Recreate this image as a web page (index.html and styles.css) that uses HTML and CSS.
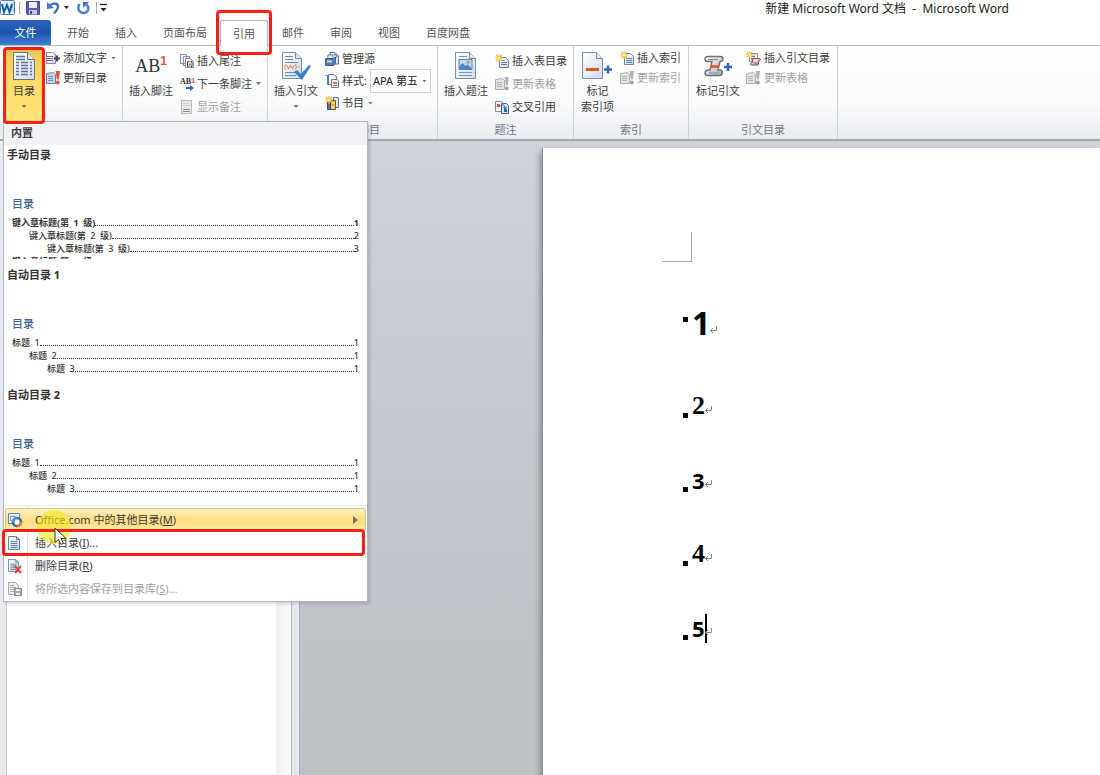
FILE: index.html
```html
<!DOCTYPE html>
<html lang="zh-CN">
<head>
<meta charset="utf-8">
<title>新建 Microsoft Word 文档 - Microsoft Word</title>
<link rel="stylesheet" href="styles.css">
</head>
<body>
<svg class="sprite" aria-hidden="true">
  <defs>
    <linearGradient id="paper" x1="0" y1="0" x2="1" y2="1"><stop offset="0" stop-color="#fff"/><stop offset="1" stop-color="#cfdcec"/></linearGradient>
    <linearGradient id="metal" x1="0" y1="0" x2="1" y2="1"><stop offset="0" stop-color="#fff"/><stop offset="1" stop-color="#a9adb3"/></linearGradient>
    <symbol id="star" viewBox="0 0 8 8"><path d="M4 0v8M0 4h8M1 1l6 6M7 1L1 7" stroke="#eebc35" stroke-width="1.2"/><circle cx="4" cy="4" r="1.5" fill="#fff3a8"/></symbol>
    <symbol id="page" viewBox="0 0 12 14"><path d="M.5.5h8l3 3v10H.5z" fill="url(#paper)" stroke="#6c83a3"/><path d="M8.500 .5v3h3M2.500 5.500h7M2.500 7.500h7M2.500 9.500h7M2.500 11.500h7" fill="none" stroke="#607da4"/></symbol>
    <symbol id="update" viewBox="0 0 14 14"><path d="M.5 2.500l7-1 2 2v9h-9z" fill="#c4d3e6" stroke="#6c83a3"/><path d="M2 5.500h5M2 7.500h5M2 9.500h5" stroke="#7890b2"/><path d="M9.500 0H14l-1.200 8.500h-2z" fill="#f0512d"/><circle cx="11.800" cy="11.500" r="1.900" fill="#f0512d"/></symbol>
    <symbol id="update-off" viewBox="0 0 14 14"><path d="M.5 2.500l7-1 2 2v9h-9z" fill="#e2e2e2" stroke="#b0b0b0"/><path d="M2 5.500h5M2 7.500h5M2 9.500h5" stroke="#b5b5b5"/><path d="M9.500 0H14l-1.200 8.500h-2z" fill="#b4b4b4"/><circle cx="11.800" cy="11.500" r="1.900" fill="#a4a4a4"/></symbol>
    <symbol id="return" viewBox="0 0 7 8"><path d="M6.500 0v4.500h-6M3 2L.5 4.500 3 7" fill="none" stroke="#888"/></symbol>
  </defs>
</svg>

<div class="app">
  <header class="titlebar">
    <div class="quick">
      <svg width="16" height="16" viewBox="0 0 16 16"><rect x=".5" y=".5" width="14" height="14" rx="1" fill="#eaf3fc" stroke="#4d82ba"/><path d="M11 3h3M11 5h3M11 7h3M11 9h3M11 11h3" stroke="#8fb2d8"/><path d="M2 4l2 8 3-7 2.500 7L12 4" fill="none" stroke="#195ba7" stroke-width="2"/></svg>
      <span class="divider"></span>
      <button class="plain" aria-label="保存"><svg width="14" height="14" viewBox="0 0 14 14"><path d="M.5.5h13v13h-12l-1-1z" fill="#5a5ab6" stroke="#494894"/><path d="M3 1h8v6H3z" fill="#eef3fc"/><path d="M3 9h8v4.500H3z" fill="#c7cbe2"/><path d="M4 10h2v3H4z" fill="#45458c"/></svg></button>
      <button class="plain undo" aria-label="撤消"><svg width="13" height="14" viewBox="0 0 13 14"><path d="M2 5.500c2-3 8-4.500 9-.5 .5 3-2 5-4 7.500" fill="none" stroke="#3e72c4" stroke-width="2.400"/><path d="M0 1l0 7 7-1z" fill="#3e72c4"/></svg></button>
      <span class="caret dark"></span>
      <button class="plain redo" aria-label="重复"><svg width="13" height="14" viewBox="0 0 13 14"><path d="M2.500 3C0 7 2 12 6.500 12s6.500-5 3-8.500" fill="none" stroke="#4b85d0" stroke-width="2.500"/><path d="M6 1h6l-6 6z" fill="#3e72c4"/></svg></button>
      <span class="divider"></span>
      <button class="plain" aria-label="自定义快速访问工具栏"><svg width="8" height="10" viewBox="0 0 8 10"><path d="M0 1.500h7" stroke="#222" stroke-width="1.300"/><path d="M.5 5h6L3.500 8.500z" fill="#222"/></svg></button>
    </div>
    <h1 class="title">新建 Microsoft Word 文档 &nbsp;- &nbsp;Microsoft Word</h1>
  </header>

  <nav class="tabs">
    <button class="tab file">文件</button>
    <button class="tab">开始</button>
    <button class="tab">插入</button>
    <button class="tab">页面布局</button>
    <button class="tab active">引用<span class="mark"></span></button>
    <button class="tab">邮件</button>
    <button class="tab">审阅</button>
    <button class="tab">视图</button>
    <button class="tab">百度网盘</button>
  </nav>

  <section class="ribbon">
    <div class="group contents">
      <div class="tools">
        <button class="big open">
          <span class="art"><svg width="22" height="28" viewBox="0 0 22 28"><path d="M.5.5h14l7 7v20H.5z" fill="url(#paper)" stroke="#65738a"/><path d="M14.500 .5v7h7" fill="#e2ebf6" stroke="#65738a"/><path d="M3 4.500h9M3 7.500h9M3 10.500h3M3 13.500h3M3 16.500h3M3 19.500h3M3 22.500h3M8 10.500h7M8 13.500h7M8 16.500h7M8 19.500h7M8 22.500h7M17 10.500h2M17 13.500h2M17 16.500h2M17 19.500h2M17 22.500h2" stroke="#57769f" stroke-width="1.400"/></svg></span>
          目录<span class="caret"></span><span class="mark"></span>
        </button>
        <div class="stack">
          <button class="small"><svg width="14" height="14" viewBox="0 0 14 14"><path d="M.5 1.500h6l3 2v9h-9z" fill="url(#paper)" stroke="#7f8ca5"/><path d="M1 5.500h6M1 9.500h6" stroke="#5c7aa6"/><path d="M1 7.500h6" stroke="#e34a35"/><path d="M11 4.500v6M8 7.500h6" stroke="#3b4259" stroke-width="2"/></svg>添加文字<span class="caret"></span></button>
          <button class="small"><svg width="14" height="14"><use href="#update"/></svg>更新目录</button>
        </div>
      </div>
    </div>

    <div class="group">
      <div class="tools">
        <button class="big">
          <span class="art"><span class="ab">AB<sup>1</sup></span></span>
          插入脚注
        </button>
        <div class="stack three">
          <button class="small"><svg width="14" height="14" viewBox="0 0 14 14"><path d="M.5.5h6v9h-6zM3.500 2.500h6v9h-6z" fill="#f3f7fc" stroke="#7e91ad"/><path d="M5.500 4.500h5l3 3v6h-8z" fill="#fff" stroke="#7e91ad"/><path d="M8.500 7.500h-1v5h1M11 7.500h1v5h-1" fill="none" stroke="#333"/><path d="M9.800 7v1.500M9.800 9.500v3" stroke="#e0482d" stroke-width="1.300"/></svg>插入尾注</button>
          <button class="small"><span class="ab mini"><span>AB</span><sup>1</sup><svg width="8" height="6" viewBox="0 0 8 6"><path d="M0 2h4V0l4 3-4 3V4H0z" fill="#2d68b7"/></svg></span>下一条脚注<span class="caret"></span></button>
          <button class="small" disabled><svg width="14" height="14" viewBox="0 0 14 14"><path d="M1.500 .5h10v13h-10z" fill="#e9e9e9" stroke="#b8b8b8"/><path d="M3 9.500h7M3 11.500h7" stroke="#888"/><path d="M3 3.500h7M3 5.500h7" stroke="#d2d2d2"/></svg>显示备注</button>
        </div>
      </div>
    </div>

    <div class="group">
      <div class="tools">
        <button class="big">
          <span class="art"><svg width="30" height="30" viewBox="0 0 30 30"><path d="M1.500 1.500h13l6 6v20h-19z" fill="url(#paper)" stroke="#7890ad"/><path d="M14.500 1.500v6h6" fill="#dce8f5" stroke="#7890ad"/><path d="M4 5.500h8M4 8.500h8M4 11.500h13M4 21.500h11M4 24.500h11" stroke="#6c8bb4"/><path d="M5 13.500c-2 2-2 3 0 5M14 13.500c2 2 2 3 0 5M6 14.500l1.500 3 2-3 2 3 1.500-3M16.500 16h3" fill="none" stroke="#e59a62" stroke-width="1.200"/><path d="M13 21l3-2 4 4 8-9 2 1-9 14z" fill="#3c7ed0"/></svg></span>
          插入引文<span class="caret"></span>
        </button>
        <div class="stack mid">
          <button class="small"><svg width="14" height="14" viewBox="0 0 14 14"><path d="M5 .5h5l3.500 3.500v8H5z" fill="#e3ecf7" stroke="#5b77a1"/><path d="M3 3h5v4H3z" fill="#fff" stroke="#55749e"/><path d="M.5 6.500h8l2-1.500v6l-2 2.500h-8z" fill="#527eaf" stroke="#3b5f8e"/><path d="M2 8.500h5v2H2z" fill="#d4e3f2"/><path d="M9 2.500c2 0 3 1 3 3" fill="none" stroke="#2e5489"/></svg>管理源</button>
          <div class="small"><svg width="14" height="14" viewBox="0 0 14 14"><path d="M.5 1.500h2v9h3M3.500 .5h5l3 2v8h-8z" fill="#eef3fa" stroke="#667fa6"/><path d="M6.500 5.500h6l1 2v6h-7z" fill="#f8f2f5" stroke="#7c7392"/><path d="M8 9h4" stroke="#e0432d" stroke-width="1.500"/><path d="M8 11.500h4" stroke="#657ca1"/></svg><label for="style">样式:</label>
            <span class="pick"><select id="style"><option>APA 第五版</option></select><span class="caret"></span></span>
          </div>
          <button class="small"><svg width="14" height="14" viewBox="0 0 14 14"><path d="M8.500 1.500h5v10h-5z" fill="#dae6f4" stroke="#5e7da8"/><path d="M5.500 4.500h5v9h-5z" fill="#e7b23b" stroke="#775b23"/><path d="M2.500 5.500h3v8h-3z" fill="#5c6da5" stroke="#3d4a79"/><path d="M6 7h4M6 11h4" stroke="#fff0b0"/><use href="#star" width="8" height="8"/></svg>书目<span class="caret"></span></button>
        </div>
      </div>
      <div class="caption">引文与书目</div>
    </div>

    <div class="group">
      <div class="tools">
        <button class="big">
          <span class="art"><svg width="22" height="28" viewBox="0 0 22 28"><path d="M.5.5h14l6 6v20H.5z" fill="url(#paper)" stroke="#7890ad"/><path d="M14.500 .5v6h6" fill="#dce8f5" stroke="#7890ad"/><path d="M4 7.500h13v10H4z" fill="#b9d8f4" stroke="#5c82b5"/><path d="M4.500 17v-3l3-3 3 3 2-1.500 4 3.500v1z" fill="#4c83c4"/><circle cx="13" cy="10.500" r="1.400" fill="#ed7b48"/><path d="M4 4.500h8M4 20.500h13M4 23.500h13" stroke="#7797be"/></svg></span>
          插入题注
        </button>
        <div class="stack three">
          <button class="small"><svg width="14" height="14" viewBox="0 0 14 14"><path d="M4.500 3.500h6l3 3v7h-9z" fill="url(#paper)" stroke="#6c83a3"/><path d="M6 8.500h6M6 10.500h6M7.500 6.500h2" stroke="#607da4"/><use href="#star" width="8" height="8"/></svg>插入表目录</button>
          <button class="small" disabled><svg width="14" height="14"><use href="#update-off"/></svg>更新表格</button>
          <button class="small"><svg width="14" height="14" viewBox="0 0 14 14"><path d="M.5 1.500h6l2 2v8h-8z" fill="#f8fbff" stroke="#6d8bb4"/><path d="M6.500 3.500h5l2 2v8h-7z" fill="#d7e4f4" stroke="#40669d"/><path d="M2 4h3v3H2z" fill="#e64d32"/><path d="M9 9h3v3H9z" fill="#3264ab"/><path d="M5 6c3-2 5-1 5 2M8.500 7l1.500 2 1.500-2" fill="none" stroke="#2b579c"/></svg>交叉引用</button>
        </div>
      </div>
      <div class="caption">题注</div>
    </div>

    <div class="group wide">
      <div class="tools">
        <button class="big">
          <span class="art"><svg width="30" height="28" viewBox="0 0 30 28"><path d="M.5.5h14l6 6v20H.5z" fill="url(#paper)" stroke="#7890ad"/><path d="M14.500 .5v6h6" fill="#dce8f5" stroke="#7890ad"/><path d="M4 17.500h13" stroke="#ea5023" stroke-width="3"/><path d="M26 13.500v8M22 17.500h8" stroke="#3167c4" stroke-width="2.600"/></svg></span>
          标记<br>索引项
        </button>
        <div class="stack">
          <button class="small"><svg width="14" height="14" viewBox="0 0 14 14"><path d="M4.500 2.500h6l3 3v8h-9z" fill="url(#paper)" stroke="#6c83a3"/><path d="M6 7.500h6M6 9.500h6M6 11.500h6" stroke="#607da4"/><use href="#star" width="8" height="8"/></svg>插入索引</button>
          <button class="small" disabled><svg width="14" height="14"><use href="#update-off"/></svg>更新索引</button>
        </div>
      </div>
      <div class="caption">索引</div>
    </div>

    <div class="group wide">
      <div class="tools">
        <button class="big">
          <span class="art"><svg width="28" height="22" viewBox="0 0 28 22"><path d="M4 1.500h12c4 0 4 5 0 5l-2 8.500h2c3 0 3 5 0 5.500H4c-4 0-4-5 0-5.500h2l2-8.500H4c-4 0-4-5 0-5z" fill="url(#metal)" stroke="#6b7078" stroke-width="1.400"/><path d="M4 4.500h10M5 18h10" stroke="#85898f"/><path d="M6 11.500h9" stroke="#ea5023" stroke-width="2.600"/><path d="M24 8v8M20 12h8" stroke="#3167c4" stroke-width="2.600"/></svg></span>
          标记引文
        </button>
        <div class="stack">
          <button class="small"><svg width="15" height="15" viewBox="0 0 15 15"><path d="M3.500 2.500h8v8h-8z" fill="#f5f5f7" stroke="#8a8f9c"/><path d="M5 5.500h4M5 8h3" stroke="#e65434" stroke-width="1.500"/><path d="M7 7.500h6c2 0 2 2 0 2l-1 4.500H6c-2 0-2-2 0-2z" fill="url(#metal)" stroke="#555a65"/><path d="M7.500 12h4" stroke="#e0482d"/><use href="#star" width="7" height="7"/></svg>插入引文目录</button>
          <button class="small" disabled><svg width="15" height="14"><use href="#update-off" width="14" height="14"/></svg>更新表格</button>
        </div>
      </div>
      <div class="caption">引文目录</div>
    </div>

    <div class="menu">
      <div class="menu-head">内置</div>
      <div class="entry">
        <h2>手动目录</h2>
        <div class="preview strong">
          <h3>目录</h3>
          <p class="l1">键入章标题(第&ensp;1&ensp;级)<i></i>1</p>
          <p class="l2">键入章标题(第&ensp;2&ensp;级)<i></i>2</p>
          <p class="l3">键入章标题(第&ensp;3&ensp;级)<i></i>3</p>
          <p class="l1">键入章标题(第&ensp;1&ensp;级)<i></i>4</p>
        </div>
      </div>
      <div class="entry">
        <h2>自动目录 1</h2>
        <div class="preview">
          <h3>目录</h3>
          <p class="l1">标题&ensp;1<i></i>1</p>
          <p class="l2">标题&ensp;2<i></i>1</p>
          <p class="l3">标题&ensp;3<i></i>1</p>
        </div>
      </div>
      <div class="entry">
        <h2>自动目录 2</h2>
        <div class="preview">
          <h3>目录</h3>
          <p class="l1">标题&ensp;1<i></i>1</p>
          <p class="l2">标题&ensp;2<i></i>1</p>
          <p class="l3">标题&ensp;3<i></i>1</p>
        </div>
      </div>
      <div class="commands">
        <button class="command hot"><svg width="16" height="16" viewBox="0 0 16 16"><path d="M1.500 1.500h11v10h-11z" fill="#e8f1fb" stroke="#6387b5"/><path d="M3.500 4.500h5v4h-5z" fill="#fff" stroke="#7b9bc6"/><circle cx="10" cy="10" r="4" fill="#fff" stroke="#2e6fb5" stroke-width="2.600"/><path d="M6 10a4 4 0 0 1 4-4" fill="none" stroke="#44a0cf" stroke-width="2.600"/><path d="M14 10a4 4 0 0 1-4 4" fill="none" stroke="#ed7d27" stroke-width="2.600"/></svg><span>Office.com 中的其他目录(<u>M</u>)</span><svg class="more" width="5" height="8" viewBox="0 0 5 8"><path d="M0 0l5 4-5 4z" fill="#777668"/></svg></button>
        <button class="command"><svg width="14" height="14" viewBox="-1 0 14 14"><use href="#page" width="12" height="14"/></svg><span>插入目录(<u>I</u>)...</span><span class="mark"></span></button>
        <button class="command"><svg width="16" height="16" viewBox="0 0 16 16"><use href="#page" x="1" y="1" width="11" height="13"/><path d="M8 8l6 7M14 8l-6 7" stroke="#e5482f" stroke-width="2"/></svg><span>删除目录(<u>R</u>)</span></button>
        <button class="command" disabled><svg width="16" height="16" viewBox="0 0 16 16"><path d="M1.500 1.500h7l3 3v9h-10z" fill="#eee" stroke="#aaa"/><path d="M3 4.500h4M3 6.500h6M3 8.500h4M3 10.500h4" stroke="#aaa"/><path d="M7.500 7.500h7v7h-7z" fill="#aaa" stroke="#8b8b8b"/><path d="M9 8h4v2H9zM9 12h4v2H9z" fill="#eee"/></svg><span>将所选内容保存到目录库(<u>S</u>)...</span></button>
        <div class="spot"></div>
        <svg class="pointer" width="13" height="19" viewBox="0 0 13 19"><path d="M1 1v14.500l3.500-3 2.300 5 2.600-1.200-2.300-4.800H12z" fill="#fff" stroke="#333"/></svg>
      </div>
    </div>
  </section>

  <main class="workspace">
    <aside class="nav-pane"><div class="nav-list"></div><div class="nav-scroll"></div></aside>
    <div class="desk">
      <article class="sheet">
        <div class="corner"></div>
        <h2 class="line one"><span class="dot"></span>1<svg width="7" height="8"><use href="#return"/></svg></h2>
        <h3 class="line serif"><span class="dot"></span>2<svg width="7" height="8"><use href="#return"/></svg></h3>
        <h4 class="line"><span class="dot"></span>3<svg width="7" height="8"><use href="#return"/></svg></h4>
        <h5 class="line serif"><span class="dot"></span>4<svg width="7" height="8"><use href="#return"/></svg></h5>
        <h6 class="line"><span class="dot"></span>5<span class="cursor"></span><svg width="7" height="8"><use href="#return"/></svg></h6>
      </article>
    </div>
  </main>
</div>
</body>
</html>
```
FILE: styles.css
```css
* { box-sizing: border-box; }
body {
  margin: 0;
  background: #fff;
  color: #3b3b3b;
  font: 11px/16px "Noto Sans", "Noto Sans CJK SC", sans-serif;
}
h1, h2, h3, h4, h5, h6, p { margin: 0; font: inherit; }
button {
  margin: 0;
  padding: 0;
  border: 0;
  background: none;
  color: inherit;
  font: inherit;
  white-space: nowrap;
}
svg { display: block; flex: none; }
.sprite { position: absolute; width: 0; height: 0; }
.app { display: flex; flex-direction: column; min-height: 100vh; }

.mark {
  position: absolute;
  z-index: 5;
  border: 3px solid #fd1f14;
  border-radius: 4px;
  pointer-events: none;
}
.caret {
  flex: none;
  width: 5px;
  height: 3px;
  background: #777;
  clip-path: polygon(0 0, 100% 0, 50% 100%);
}
.caret.dark { background: #222; }

/* Title bar */
.titlebar { display: flex; justify-content: space-between; height: 20px; }
.quick { display: flex; align-items: center; height: 15px; }
.divider { width: 1px; height: 12px; margin: 0 6px 0 3px; background: #aaa; }
.undo { margin: 0 4px 0 7px; }
.redo { margin: 0 3px 0 8px; }
.redo + .divider { margin-right: 3px; }
.title { padding: 1px 91px 0 0; color: #222; font-size: 12px; }

/* Tabs */
.tabs { display: flex; height: 25px; }
.tab { position: relative; padding: 0 13px; color: #555; }
.tab.file {
  width: 51px;
  margin-right: 3px;
  border-radius: 0 3px 0 0;
  background: linear-gradient(#2a63bd, #1f57b0 50%, #3c80d6);
  color: #fff;
}
.tab.active {
  z-index: 2;
  height: 26px;
  margin: 0 1px 0 0;
  border: 1px solid #b4b8be;
  border-bottom: 0;
  border-radius: 3px 3px 0 0;
  padding: 0 12px;
  background: #fff;
}
.tab.active .mark { inset: -11px -5px -9px -5px; }

/* Ribbon */
.ribbon {
  position: relative;
  z-index: 1;
  display: flex;
  height: 96px;
  border-top: 1px solid #b9bec6;
  border-bottom: 2px solid #a3a7b1;
  background: linear-gradient(#fff, #fafbfc 60%, #e9ecf0);
}
.group {
  display: flex;
  flex-direction: column;
  justify-content: space-between;
  padding: 2px 6px 0;
  border-right: 1px solid #cfd3d9;
}
.group.contents { padding-left: 5px; }
.group.wide { padding: 2px 7px 0; }
.tools { display: flex; gap: 7px; }
.contents .tools { gap: 3px; }
.wide .tools { gap: 6px; }
.big {
  position: relative;
  display: flex;
  flex-direction: column;
  align-items: center;
  height: 74px;
}
.big .caret { margin-top: 6px; }
.art { display: flex; align-items: center; justify-content: center; height: 35px; }
.big:has(br) { width: 33px; }
.big.open {
  width: 38px;
  background: linear-gradient(#f3c64d, #ffdc68 50%, #ffe27a);
}
.big.open .mark { inset: -1px -2px -2px -2px; }
.stack { display: flex; flex-direction: column; }
.small { display: flex; align-items: center; gap: 3px; height: 20px; }
.three { padding-top: 1px; }
.three .small { height: 23px; }
.mid .small { height: 22px; }
.small .caret { margin-left: 1px; }
button:disabled { color: #a2a2a2; }
.ab { font: 18px/18px "Liberation Serif", serif; color: #333; }
.ab sup { color: #e2522b; font: bold 12px/8px "Liberation Sans", sans-serif; vertical-align: 7px; }
.ab.mini {
  position: relative;
  display: flex;
  width: 14px;
  height: 14px;
  font: bold 8px/10px "Liberation Serif", serif;
}
.ab.mini sup { font-size: 7px; line-height: 7px; }
.ab.mini svg { position: absolute; right: 0; bottom: 0; }
.pick {
  position: relative;
  display: flex;
  align-items: center;
  width: 61px;
  height: 24px;
}
.pick select {
  width: 100%;
  height: 100%;
  padding: 0 13px 0 2px;
  border: 1px solid #d0d3d8;
  border-radius: 0;
  appearance: none;
  background: #fff;
  color: #222;
  font: inherit;
}
.pick .caret { position: absolute; right: 4px; }
.caption { height: 17px; color: #737883; text-align: center; }

/* Contents gallery */
.menu {
  position: absolute;
  z-index: 3;
  top: 75px;
  left: 3px;
  width: 365px;
  border: 1px solid #b2b6be;
  background: #fff;
  box-shadow: 2px 2px 3px rgb(60 60 90 / 20%);
}
.menu-head { height: 23px; padding: 3px 7px; background: #f0f2f6; font-weight: 700; }
.entry { height: 120px; padding: 2px 8px 0 3px; color: #333; }
.entry h2 { font-weight: 700; }
.preview {
  height: 96px;
  padding: 32px 0 0 5px;
  overflow: hidden;
  font: 500 9px/13px "Noto Sans", "Noto Sans CJK SC", sans-serif;
}
.preview h3 { margin-bottom: 5px; color: #40658f; font: 500 11px/16px "Noto Sans CJK SC", sans-serif; }
.preview p { display: flex; }
.preview.strong .l1 { font-weight: 700; }
.preview i { flex: 1; height: 10px; border-bottom: 1px dotted #333; }
.l2 { padding-left: 17px; }
.l3 { padding-left: 35px; }
.commands {
  position: relative;
  padding: 2px 1px 1px;
  border-top: 1px solid #e3e6ec;
  background: linear-gradient(90deg, #fff 23px, #e0e3e8 23px, #e0e3e8 24px, #fff 24px);
}
.command {
  position: relative;
  display: grid;
  grid-template-columns: 22px 1fr auto;
  align-items: center;
  column-gap: 6px;
  width: 100%;
  height: 23px;
  padding: 0 7px 0 2px;
  text-align: left;
}
.command.hot {
  border: 1px solid #dbc17d;
  border-radius: 2px;
  padding: 0 7px 0 1px;
  background: linear-gradient(#fff3c9, #ffdf8c 40%, #ffdd83 70%, #fff0bb);
}
.command .mark { inset: -2px 1px -2px -3px; }
.spot {
  position: absolute;
  left: 33px;
  top: 4px;
  width: 34px;
  height: 34px;
  border-radius: 50%;
  background: rgb(244 232 30 / 60%);
}
.pointer { position: absolute; left: 50px; top: 21px; z-index: 6; }

/* Workspace */
.workspace { display: flex; flex: 1; }
.nav-pane {
  display: flex;
  width: 300px;
  padding: 7px 7px 0 6px;
  border-right: 1px solid #a7adb6;
  background: #e6eaef;
}
.nav-list { flex: 1; border-left: 1px solid #c5cad1; background: #fff; }
.nav-scroll {
  width: 16px;
  border-right: 1px solid #b5bac1;
  background: linear-gradient(90deg, #f0f0f0, #fafafa);
}
.desk {
  display: flex;
  flex: 1;
  padding: 7px 0 0 242px;
  background: linear-gradient(#d0d2da, #c8cbd2 30%, #bcc1c5);
}
.sheet {
  flex: 1;
  padding: 84px 0 0 119px;
  border-left: 1px solid #888d92;
  background: #fff;
  box-shadow: -2px 4px 6px #858b90;
}
.corner {
  width: 30px;
  height: 30px;
  margin-bottom: 14px;
  border: solid #aaa;
  border-width: 0 1px 1px 0;
}
.line {
  display: flex;
  align-items: center;
  height: 74px;
  padding-left: 21px;
  color: #000;
  font: bold 22px/30px "Open Sans", "Noto Sans", sans-serif;
}
.line svg { margin-top: 8px; }
.line.one { height: 93px; font-size: 32px; }
.line.serif { font-family: "Liberation Serif", serif; font-size: 26px; }
.dot { width: 5px; height: 5px; margin: 19px 4px 0 0; background: #000; }
.one .dot { margin: 0 4px 7px 0; }
.one svg { margin-top: 14px; }
.cursor { width: 2px; height: 29px; margin-right: -2px; background: #000; }
```
